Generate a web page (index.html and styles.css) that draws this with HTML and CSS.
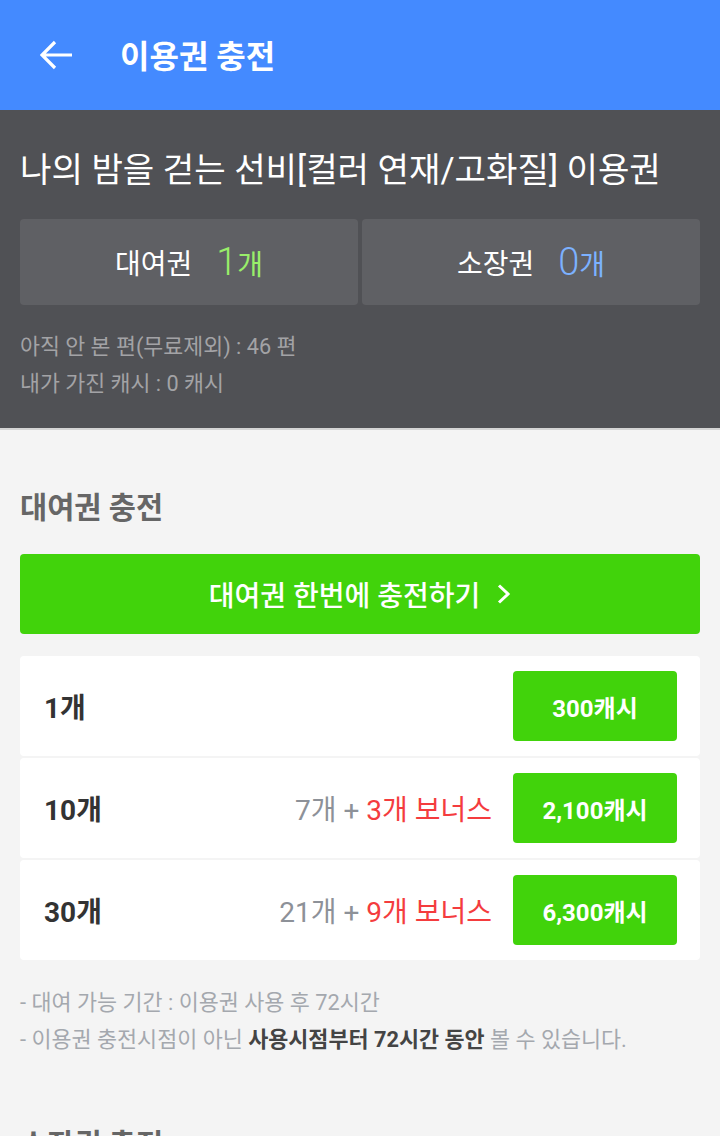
FILE: index.html
```html
<!DOCTYPE html>
<html lang="ko">

<head>
  <title>이용권 충전</title>
  <meta name="viewport" content="width=device-width, initial-scale=1.0">
  <meta charset="UTF-8">
  <link rel="stylesheet" href="styles.css">
</head>

<body>

<div class="appbar">
  <button class="back">
    <svg width="32" height="30" viewBox="0 0 32 30">
      <path d="M15 2 L2 15 L15 28 M2 15 H32" fill="none" stroke="#fff" stroke-width="3.2"/>
    </svg>
  </button>
  <h1 class="appbar-title">이용권 충전</h1>
</div>

<div class="summary">
  <h2 class="summary-title">나의 밤을 걷는 선비[컬러 연재/고화질] 이용권</h2>
  <div class="tickets">
    <div class="ticket">대여권 <span class="count green"><b>1</b>개</span></div>
    <div class="ticket">소장권 <span class="count blue"><b>0</b>개</span></div>
  </div>
  <p class="info">아직 안 본 편(무료제외) : 46 편</p>
  <p class="info">내가 가진 캐시 : 0 캐시</p>
</div>

<div class="section">
  <h3 class="section-title">대여권 충전</h3>
  <button class="charge-all">대여권 한번에 충전하기
    <svg width="14" height="20" viewBox="0 0 14 20">
      <path d="M2 1.5 L11 10 L2 18.5" fill="none" stroke="#fff" stroke-width="3"/>
    </svg>
  </button>

  <div class="options">
    <div class="option">
      <span class="amount">1개</span>
      <button class="price">300캐시</button>
    </div>
    <div class="option">
      <span class="amount">10개</span>
      <span class="bonus">7개 + <em>3개 보너스</em></span>
      <button class="price">2,100캐시</button>
    </div>
    <div class="option">
      <span class="amount">30개</span>
      <span class="bonus">21개 + <em>9개 보너스</em></span>
      <button class="price">6,300캐시</button>
    </div>
  </div>

  <p class="note">- 대여 가능 기간 : 이용권 사용 후 72시간</p>
  <p class="note">- 이용권 충전시점이 아닌 <strong>사용시점부터 72시간 동안</strong> 볼 수 있습니다.</p>

  <h3 class="section-title next">소장권 충전</h3>
</div>

</body>

</html>
```

FILE: styles.css
```css
body {
  margin: 0;
  background: #f4f4f4;
  font-family: Roboto, "Noto Sans CJK KR", sans-serif;
}

.appbar {
  display: flex;
  align-items: center;
  height: 110px;
  background: #448aff;
}

.back {
  display: flex;
  margin-left: 40px;
  padding: 0;
  background: none;
  border: none;
}

.appbar-title {
  margin: 0 0 2px 48px;
  color: #fff;
  font-size: 32px;
  font-weight: bold;
}

.summary {
  padding: 36px 20px 26px;
  background: #505155;
  border-bottom: 2px solid #d4d4d4;
}

.summary-title {
  margin: 0;
  color: #fff;
  font-size: 34.2px;
  font-weight: normal;
  line-height: 48px;
  white-space: nowrap;
}

.tickets {
  display: flex;
  gap: 4px;
  margin: 25px 0 23px;
}

.ticket {
  flex: 1;
  display: flex;
  justify-content: center;
  align-items: center;
  height: 86px;
  background: #5f6064;
  border-radius: 4px;
  color: #fff;
  font-size: 28px;
}

.count {
  margin-left: 24px;
  font-size: 28px;
}

.count b {
  font-size: 38px;
  font-weight: 300;
}

.green { color: #99ee6a; }
.blue { color: #7cb1ff; }

.info {
  margin: 0;
  color: #a3a3a6;
  font-size: 21.7px;
  line-height: 37px;
}

.section {
  padding: 60px 20px 0;
}

.section-title {
  margin: 0;
  color: #666;
  font-size: 29.5px;
  font-weight: bold;
  line-height: 36px;
}

.section-title.next {
  margin-top: 69px;
}

.charge-all {
  display: flex;
  justify-content: center;
  align-items: center;
  gap: 17px;
  width: 100%;
  height: 80px;
  margin-top: 28px;
  background: #41d30b;
  border: none;
  border-radius: 4px;
  color: #fff;
  font-family: inherit;
  font-size: 28px;
  font-weight: 500;
}

.options {
  display: flex;
  flex-direction: column;
  gap: 2px;
  margin: 22px 0 24px;
}

.option {
  display: flex;
  align-items: center;
  height: 100px;
  padding: 0 23px 0 24px;
  background: #fff;
  border-radius: 4px;
}

.amount {
  margin-right: auto;
  color: #333;
  font-size: 28px;
  font-weight: bold;
}

.bonus {
  margin-right: 21px;
  color: #8d9198;
  font-size: 28px;
}

.bonus em {
  color: #f43c3e;
  font-style: normal;
}

.price {
  width: 164px;
  height: 70px;
  background: #41d30b;
  border: none;
  border-radius: 4px;
  color: #fff;
  font-family: inherit;
  font-size: 24px;
  font-weight: bold;
}

.note {
  margin: 0;
  color: #a4a8ae;
  font-size: 21.8px;
  line-height: 37px;
}

.note strong {
  color: #444;
}
```
